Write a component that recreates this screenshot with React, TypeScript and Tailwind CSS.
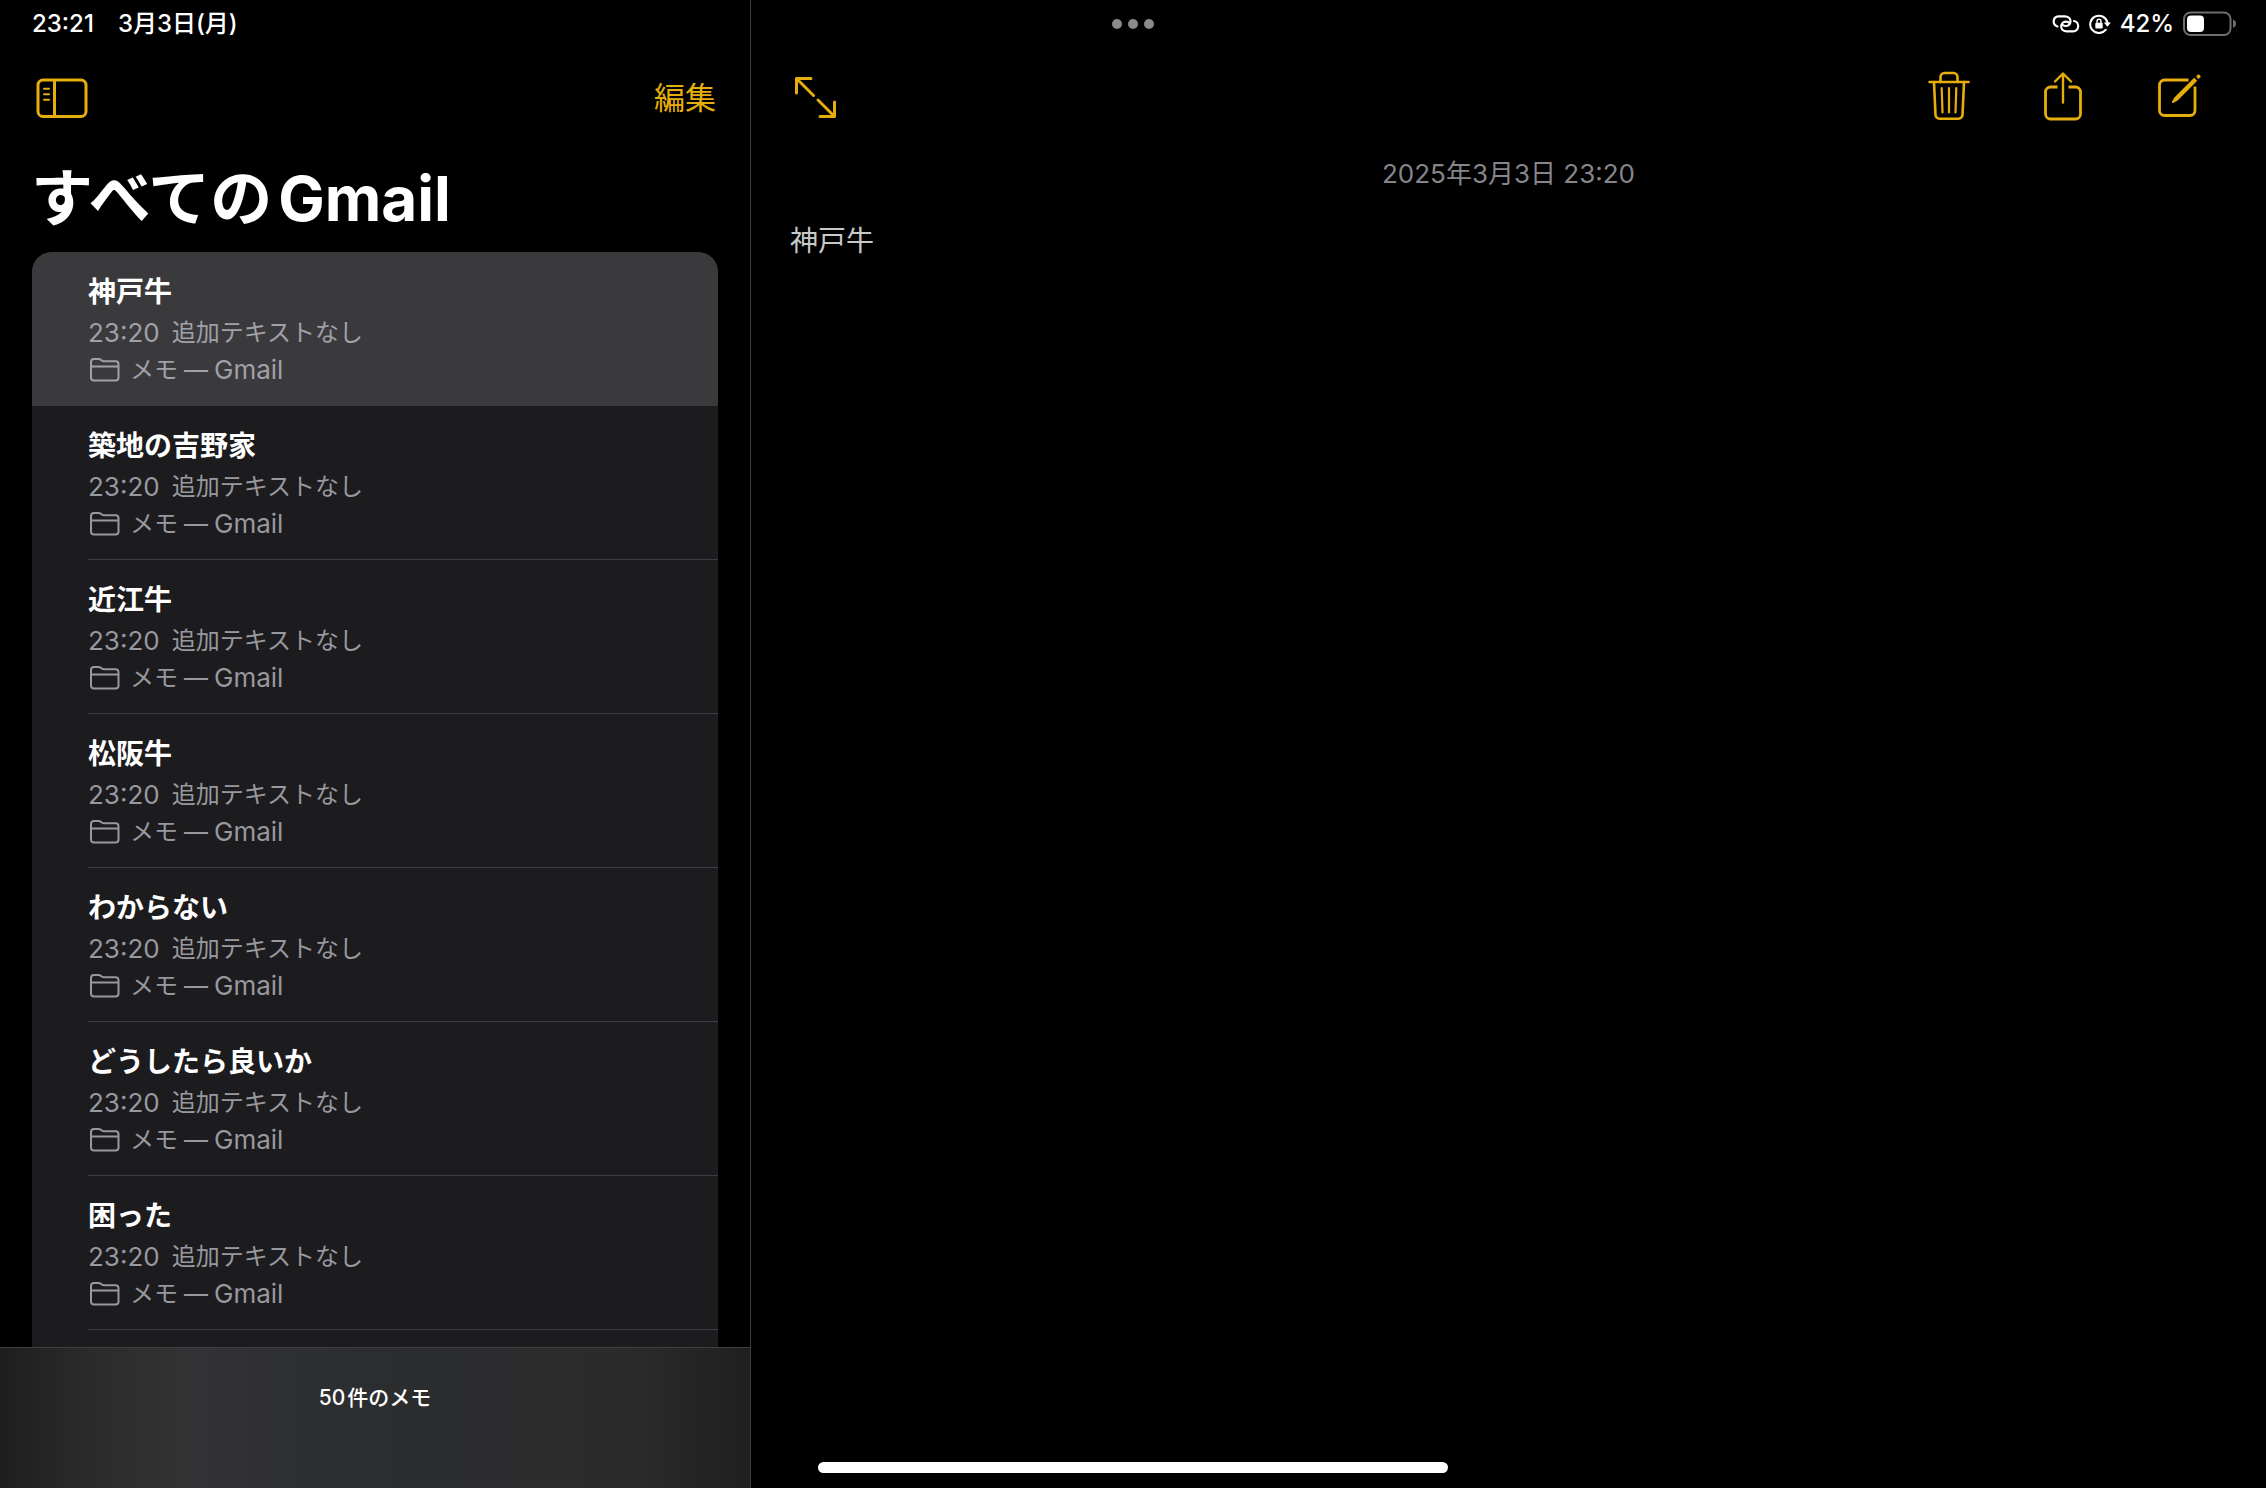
import React, { useState } from 'react';

const NOTES = [
  { id: 1, title: '神戸牛', time: '23:20' },
  { id: 2, title: '築地の吉野家', time: '23:20' },
  { id: 3, title: '近江牛', time: '23:20' },
  { id: 4, title: '松阪牛', time: '23:20' },
  { id: 5, title: 'わからない', time: '23:20' },
  { id: 6, title: 'どうしたら良いか', time: '23:20' },
  { id: 7, title: '困った', time: '23:20' },
];

const SidebarIcon = () => (
  <svg width="52" height="40" viewBox="0 0 52 40" fill="none" stroke="currentColor" aria-hidden="true">
    <rect x="2" y="2" width="48" height="36.5" rx="5" strokeWidth="3" />
    <path d="M18.500 2.500v36" strokeWidth="3" />
    <path d="M8 10.800h5M8 16.300h5M8 21.800h5" strokeWidth="2" strokeLinecap="round" />
  </svg>
);

const ExpandIcon = () => (
  <svg width="42" height="42" viewBox="0 0 42 42" fill="none" stroke="currentColor" strokeWidth="3" strokeLinecap="round" strokeLinejoin="round" aria-hidden="true">
    <path d="M1.500 16V1.500H16M1.500 1.500L18.500 18.500" />
    <path d="M39.500 25V39.500H25M39.500 39.500L23 23" />
  </svg>
);

const TrashIcon = () => (
  <svg width="42" height="50" viewBox="0 0 42 50" fill="none" stroke="currentColor" strokeLinecap="round" strokeLinejoin="round" aria-hidden="true">
    <path d="M1.500 11h39" strokeWidth="2.600" />
    <path d="M12.500 11V6a4 4 0 0 1 4-4h9a4 4 0 0 1 4 4v5" strokeWidth="2.600" />
    <path d="M6 11l1.500 33a4 4 0 0 0 4 3.700h19a4 4 0 0 0 4-3.700l1.500-33" strokeWidth="2.600" />
    <path d="M13.700 17l.8 24.500M21 17v24.500M28.300 17l-.8 24.500" strokeWidth="2.200" />
  </svg>
);

const ShareIcon = () => (
  <svg width="40" height="50" viewBox="0 0 40 50" fill="none" stroke="currentColor" strokeWidth="2.800" strokeLinecap="round" strokeLinejoin="round" aria-hidden="true">
    <path d="M13.500 16H6.500a5 5 0 0 0-5 5v22a5 5 0 0 0 5 5h25a5 5 0 0 0 5-5V21a5 5 0 0 0-5-5h-7" strokeLinecap="butt" />
    <path d="M19 31.500V3M11 10.500l8-8 8 8" strokeWidth="2.400" />
  </svg>
);

const ComposeIcon = () => (
  <svg width="44" height="44" viewBox="0 0 44 44" fill="none" stroke="currentColor" aria-hidden="true">
    <path d="M30.500 6H6.500a5 5 0 0 0-5 5v25.500a5 5 0 0 0 5 5H32a5 5 0 0 0 5-5V12.500" strokeWidth="2.800" />
    <path d="M36.200 4.800l2 2L19.300 25.700l-4.700 2.500 2.600-4.500z" fill="currentColor" strokeWidth="1.600" strokeLinejoin="round" />
    <circle cx="40.500" cy="2.600" r="1.800" fill="currentColor" strokeWidth="0.500" />
  </svg>
);

const FolderIcon = () => (
  <svg width="30" height="24" viewBox="0 0 30 24" fill="none" stroke="currentColor" strokeWidth="2" aria-hidden="true">
    <path d="M1 19.500V4a3 3 0 0 1 3-3h4.500c1.200 0 1.800.4 2.600 1.100.9.800 1.500 1.100 2.700 1.100H25.500a3 3 0 0 1 3 3v13.300a3 3 0 0 1-3 3H4a3 3 0 0 1-3-3z" />
    <path d="M1 8.500h27.500" />
  </svg>
);

const LinkIcon = () => (
  <svg width="28" height="18" viewBox="0 0 28 18" fill="none" stroke="currentColor" strokeWidth="2.200" strokeLinecap="round" aria-hidden="true">
    <path d="M5.500 11.500A5.200 5.200 0 0 1 6.500 1.300h6.300c3.400 0 5.700 2.300 5.700 5 0 2.800-2.200 4.700-4.800 4.700-1.500 0-2.700-.6-3.400-1.400" />
    <path d="M22 6a5.200 5.200 0 0 1-.8 10.300h-6.400c-3.400 0-5.600-2.200-5.600-4.900 0-2.800 2.100-4.800 4.800-4.800 1.500 0 2.700.6 3.400 1.400" />
  </svg>
);

const RotationLockIcon = () => (
  <svg width="22" height="20" viewBox="0 0 22 20" fill="none" stroke="currentColor" aria-hidden="true">
    <path d="M16.800 15.700A8.700 8.700 0 1 1 18.500 9" strokeWidth="2" strokeLinecap="round" />
    <path d="M14.800 8.500H22l-3.600 4.300z" fill="currentColor" stroke="none" />
    <rect x="6.300" y="8.800" width="7.400" height="5.800" rx="1" fill="currentColor" stroke="none" />
    <path d="M8 9V7.200a2 2 0 0 1 4 0V9" strokeWidth="1.400" />
  </svg>
);

const BatteryIcon = () => (
  <svg width="54" height="26" viewBox="0 0 54 26" aria-hidden="true">
    <rect x="1" y="1.500" width="46.500" height="22.500" rx="6.500" fill="none" stroke="#6e6e6e" strokeWidth="2" />
    <path d="M50 8.700c2 .6 3 2 3 4s-1 3.400-3 4z" fill="#6e6e6e" />
    <rect x="4" y="4.500" width="17" height="16.500" rx="4" fill="#fff" />
  </svg>
);

export default function App() {
  const [selected, setSelected] = useState(1);

  return (
    <div className="relative flex h-screen overflow-hidden bg-black font-['Inter','Noto_Sans_CJK_JP',sans-serif] text-white">
      {/* Sidebar */}
      <aside className="flex w-[751px] shrink-0 flex-col border-r border-[#3d3d41]">
        <div className="flex h-12 shrink-0 items-center gap-6 pl-8 text-[24px] font-medium">
          <span>23:21</span>
          <span>3月3日(月)</span>
        </div>

        <div className="flex h-[100px] shrink-0 items-center justify-between pr-[34px] pl-9 text-[#e5ae0c]">
          <button type="button" aria-label="サイドバー">
            <SidebarIcon />
          </button>
          <button type="button" className="text-[31px]">編集</button>
        </div>

        <h1 className="flex h-[104px] shrink-0 items-center gap-1.5 pb-1 pl-[31px] text-[62px] font-bold">
          <span>すべての</span>
          <span>Gmail</span>
        </h1>

        <ul className="mx-8 min-h-0 flex-1 overflow-hidden rounded-t-[20px] bg-[#1c1c1e]">
          {NOTES.map((note) => (
            <li key={note.id} className={selected === note.id ? 'bg-[#3a3a3c] text-[#a0a0a8]' : 'text-[#98989f]'}>
              <button type="button" onClick={() => setSelected(note.id)} className="flex h-[154px] w-full flex-col pl-14 text-left">
                <span className={`flex w-full flex-1 flex-col justify-center ${selected === note.id ? '' : 'border-b border-[#3d3d41]'}`}>
                  <span className="text-[28px] leading-[44px] font-bold text-white">{note.title}</span>
                  <span className="flex gap-3 leading-[38px]">
                    <span className="text-[26px]">{note.time}</span>
                    <span className="text-[24px]">追加テキストなし</span>
                  </span>
                  <span className="flex items-center gap-2 pl-0.5 leading-9">
                    <FolderIcon />
                    <span className="flex gap-1.5 pl-0.5">
                      <span className="text-[24px]">メモ</span>
                      <span className="flex gap-1.5">
                        <span className="text-[24px]">—</span>
                        <span className="text-[26px]">Gmail</span>
                      </span>
                    </span>
                  </span>
                </span>
              </button>
            </li>
          ))}
        </ul>

        <footer className="flex h-[141px] shrink-0 justify-center border-t border-[#3f3f41] bg-[linear-gradient(to_right,#1e1e1e,#2a2b2a_12%,#333335_25%,#2e2f30_38%,#2b2c2e_60%,#2b2b2b_84%,#222322_95%,#1f1f1f)] pt-8 text-[21px] leading-9 font-medium">
          <span className="flex gap-0.5">
            <span>50</span>
            <span>件のメモ</span>
          </span>
        </footer>
      </aside>

      {/* Note */}
      <main className="flex min-w-0 flex-1 flex-col">
        <div className="flex h-12 shrink-0 items-center justify-end gap-[9px] pr-[29px] text-[24px] font-medium">
          <LinkIcon />
          <RotationLockIcon />
          <span>42%</span>
          <BatteryIcon />
        </div>

        <div className="flex h-[100px] shrink-0 items-center justify-between pr-16 pl-11 text-[#e5ae0c]">
          <button type="button" aria-label="全画面">
            <ExpandIcon />
          </button>
          <div className="flex items-center gap-[74px] pb-1">
            <button type="button" aria-label="削除">
              <TrashIcon />
            </button>
            <button type="button" aria-label="共有">
              <ShareIcon />
            </button>
            <button type="button" aria-label="新規メモ">
              <ComposeIcon />
            </button>
          </div>
        </div>

        <p className="pt-2 text-center text-[26px] leading-9 text-[#85858b]">2025年3月3日 23:20</p>
        <p className="px-[39px] pt-[29px] text-[28px] leading-10 text-[#c8c8c8]">神戸牛</p>
      </main>

      {/* Multitasking dots */}
      <button type="button" aria-label="マルチタスク" className="absolute top-[19px] left-1/2 flex -translate-x-1/2 gap-1.5">
        <span className="size-2.5 rounded-full bg-[#8a8a8a]" />
        <span className="size-2.5 rounded-full bg-[#8a8a8a]" />
        <span className="size-2.5 rounded-full bg-[#8a8a8a]" />
      </button>

      {/* Home indicator */}
      <div className="absolute bottom-[15px] left-1/2 h-[11px] w-[630px] -translate-x-1/2 rounded-full bg-white" />
    </div>
  );
}
